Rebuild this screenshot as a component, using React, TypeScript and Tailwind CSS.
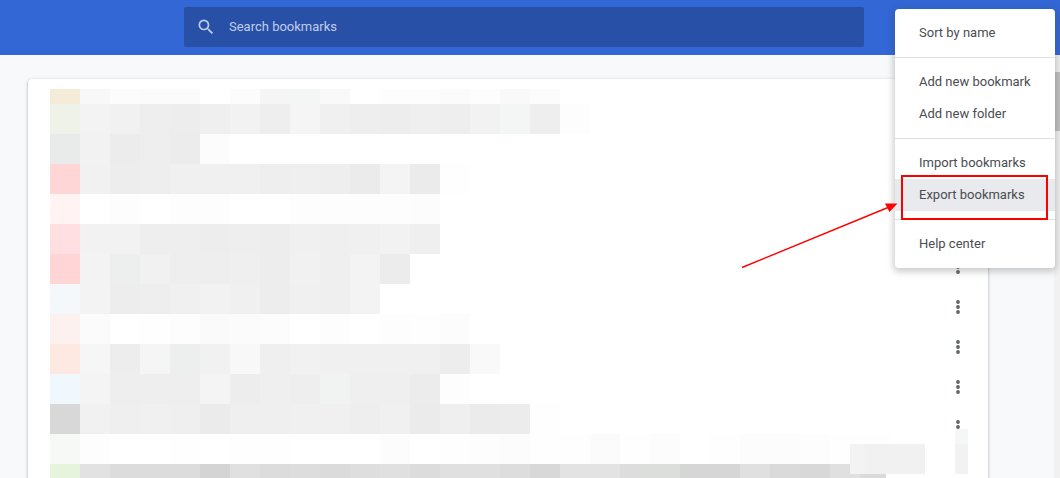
const rows = [
  { h: "h-[15px]", cells: ["#f4ebd9", "#f8f8f8", "#fbfcfb", "#fbfbfb", "#fbfbfb", "#ffffff", "#fcfcfc", "#f5f5f5", "#f4f6f5", "#f9f9f9", "#ffffff", "#fdfdfd", "#fdfdfd", "#fbfbfb", "#fdfdfd", "#f9f9f9", "#fcfcfc"] },
  { h: "h-[30px]", cells: ["#eff2e9", "#f3f3f3", "#f1f1f1", "#eeeeee", "#ededed", "#efefef", "#f2f2f2", "#eeeeee", "#f5f5f5", "#f0f0f0", "#eeeeee", "#ededed", "#efefef", "#eeeeee", "#f2f2f2", "#f4f6f5", "#eeeeee", "#fdfdfd"] },
  { h: "h-[30px]", cells: ["#e9ebea", "#f2f2f2", "#ececec", "#eeeeee", "#ececec", "#fcfcfc"] },
  { h: "h-[30px]", cells: ["#ffd6d6", "#f1f1f1", "#ededed", "#eeeeee", "#f0f0f0", "#f0f0f0", "#f0f0f0", "#eeeeee", "#efefef", "#eeeeee", "#ebebeb", "#f4f4f4", "#ebebeb", "#fefefe"] },
  { h: "h-[30px]", cells: ["#fff4f3", "#ffffff", "#fdfdfd", "#ffffff", "#fdfdfd", "#fdfdfd", "#ffffff", "#ffffff", "#fdfdfd", "#fdfdfd", "#fdfdfd", "#fdfdfd", "#fcfcfc"] },
  { h: "h-[30px]", cells: ["#ffdfe1", "#f2f2f2", "#f2f2f2", "#eeeeee", "#eeeeee", "#ecedec", "#eeeeee", "#ededed", "#f0f0f0", "#efefef", "#f0f0f0", "#f2f2f2", "#efefef"] },
  { h: "h-[30px]", cells: ["#ffd5d5", "#f3f3f3", "#edefee", "#f0f1f0", "#eeeeee", "#eeeeee", "#efefef", "#ededed", "#f1f1f1", "#efefef", "#f3f3f3", "#ececec"] },
  { h: "h-[30px]", cells: ["#f4f8fb", "#f3f3f3", "#ededed", "#eeeeee", "#f0f0f0", "#f2f2f2", "#f0f0f0", "#ededed", "#f0f0f0", "#efefef", "#f3f3f3"] },
  { h: "h-[30px]", cells: ["#fcf1ef", "#fbfbfb", "#ffffff", "#fefefe", "#fdfdfd", "#fafafa", "#fbfbfb", "#fcfcfc", "#ffffff", "#fdfdfd", "#ffffff", "#fdfdfd", "#fefefe", "#fcfcfc"] },
  { h: "h-[30px]", cells: ["#fde8e2", "#f6f6f6", "#ededed", "#f5f5f5", "#edefee", "#f1f1f1", "#f8f8f8", "#efefef", "#f1f1f1", "#f0f0f0", "#f0f0f0", "#f0f0f0", "#f0f0f0", "#ededed", "#f9f9f9"] },
  { h: "h-[30px]", cells: ["#f0f8fe", "#f4f4f4", "#eeeeee", "#eeeeee", "#eeeeee", "#f4f4f4", "#ededed", "#efefef", "#eeeeee", "#f1f3f2", "#efefef", "#efefef", "#ececec", "#fdfdfd"] },
  { h: "h-[30px]", cells: ["#d8d8d8", "#f1f1f1", "#efefef", "#f0f0f0", "#efefef", "#ebebeb", "#efefef", "#efefef", "#f0f0f0", "#f0f0f0", "#eeeeee", "#f0f0f0", "#ebebeb", "#efefef", "#ebebeb", "#ececec", "#fefefe"] },
  { h: "h-[30px]", cells: ["#f7f9f6", "#fdfdfd", "#ffffff", "#ffffff", "#fefefe", "#ffffff", "#fefefe", "#fefefe", "#ffffff", "#ffffff", "#ffffff", "#fcfcfc", "#ffffff", "#fefefe", "#fdfdfd", "#fcfcfc", "#fefefe", "#fefefe", "#fbfbfb", "#fefefe", "#fcfcfc", "#ffffff", "#fefefe", "#fcfcfc", "#fcfcfc", "#fdfdfd", "#fefefe", "#fefefe"] },
  { h: "h-[30px]", cells: ["#e6f4dd", "#e2e2e2", "#dcdcdc", "#dcdcdc", "#dcdcdc", "#d4d4d4", "#e0e0e0", "#dcdcdc", "#dddddd", "#dbdbdb", "#dedede", "#e0e0e0", "#dcdcdc", "#e0e0e0", "#e0e0e0", "#dddddd", "#d8d8d8", "#e3e3e3", "#e3e3e3", "#dcdddc", "#dcdedc", "#d6d6d6", "#d6d6d6", "#e0e0e0", "#dadada", "#d8d8d8", "#e0e0e0", "#dadada"] },
];

function Kebab() {
  return (
    <div className="flex h-10 items-center justify-center">
      <svg width="20" height="20" viewBox="0 0 20 20" fill="#5f6368">
        <circle cx="10" cy="5" r="1.9" />
        <circle cx="10" cy="10" r="1.9" />
        <circle cx="10" cy="15" r="1.9" />
      </svg>
    </div>
  );
}

function MenuItem({ label, active }: { label: string; active?: boolean }) {
  return (
    <div className={`flex h-8 items-center pl-6 text-[13px] text-[#4a4d51] ${active ? "bg-[#e8eaed]" : ""}`}>
      {label}
    </div>
  );
}

export default function App() {
  return (
    <div className="relative flex h-[478px] w-[1060px] flex-col overflow-hidden bg-[#f8f9fa] font-['Roboto',sans-serif]">
      {/* Header */}
      <div className="h-[55px] shrink-0 bg-[#3367d6] pl-[184px] pt-[7px]">
        <div className="flex h-10 w-[680px] items-center rounded-[2px] bg-[#2850a7] pl-3">
          <svg width="20" height="20" viewBox="0 0 24 24" fill="#c0cdec">
            <path d="M15.5 14h-.79l-.28-.27A6.471 6.471 0 0 0 16 9.5 6.5 6.5 0 1 0 9.5 16c1.61 0 3.09-.59 4.23-1.57l.27.28v.79l5 4.99L20.49 19l-4.99-5zm-6 0C7.01 14 5 11.99 5 9.5S7.01 5 9.5 5 14 7.01 14 9.5 11.99 14 9.5 14z" />
          </svg>
          <span className="ml-[13px] text-[13px] text-[#c0cdec]">Search bookmarks</span>
        </div>
      </div>

      <div className="flex min-h-0 flex-1">
        {/* Bookmark list */}
        <div className="min-w-0 flex-1 pl-7 pt-6">
          <div className="relative flex w-[960px] rounded-t-[4px] bg-white pl-[22px] pt-2.5 shadow-[0_1px_2px_0_rgba(60,64,67,0.3),0_1px_3px_1px_rgba(60,64,67,0.15)]">
            <div className="w-[858px] shrink-0">
              {rows.map((row, i) => (
                <div key={i} className={`flex ${row.h}`}>
                  {row.cells.map((color, j) => (
                    <div
                      key={j}
                      className={`h-full shrink-0 ${i === 13 && j === 27 ? "w-[26px]" : "w-[30px]"}`}
                      style={{ backgroundColor: color }}
                    />
                  ))}
                </div>
              ))}
            </div>
            <div className="-mt-0.5 ml-[30px] w-[40px] shrink-0 self-start">
              {Array.from({ length: 10 }).map((_, i) => (
                <Kebab key={i} />
              ))}
            </div>

            {/* Blurred patches lying over the row */}
            <div className="absolute left-[822px] top-[365px] h-[30px] w-[15px] bg-[#f3f3f3]" />
            <div className="absolute left-[837px] top-[365px] h-[30px] w-[60px] bg-[#f1f1f1]" />
            <div className="absolute left-[927px] top-[350px] h-[15px] w-[13px] bg-[#f5f7f6]" />
            <div className="absolute left-[927px] top-[365px] h-[30px] w-[13px] bg-[#f2f2f2]" />
          </div>
        </div>

        {/* Scrollbar */}
        <div className="w-1.5 shrink-0 bg-[#f1f1f1] pt-[17px]">
          <div className="h-[59px] bg-[#c1c1c1]" />
        </div>
      </div>

      {/* Dropdown menu */}
      <div className="absolute left-[895px] top-[9px] w-40 rounded-[4px] bg-white py-2 shadow-[0_2px_6px_2px_rgba(60,64,67,0.25)]">
        <MenuItem label="Sort by name" />
        <div className="my-2 h-px bg-[#e0e0e0]" />
        <MenuItem label="Add new bookmark" />
        <MenuItem label="Add new folder" />
        <div className="my-2 h-px bg-[#e0e0e0]" />
        <MenuItem label="Import bookmarks" />
        <MenuItem label="Export bookmarks" active />
        <div className="my-2 h-px bg-[#e0e0e0]" />
        <MenuItem label="Help center" />
      </div>

      {/* Annotation */}
      <div className="absolute left-[901px] top-[175px] h-[45px] w-[147px] border-2 border-[#ff0000]" />
      <svg className="absolute left-0 top-0" width="1060" height="478" viewBox="0 0 1060 478" fill="none">
        <line x1="742" y1="267.5" x2="888" y2="207.5" stroke="#ff0000" strokeWidth="1.4" />
        <polygon points="897.5,203.5 885,203.5 889.5,212" fill="#ff0000" />
      </svg>
    </div>
  );
}
